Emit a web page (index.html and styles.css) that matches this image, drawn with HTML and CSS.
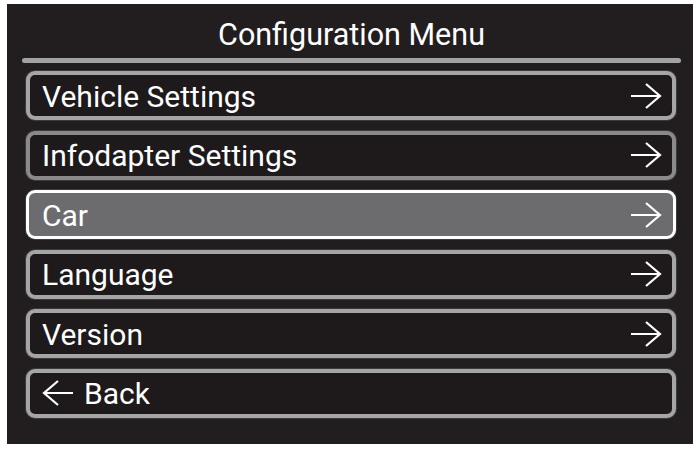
FILE: index.html
```html
<!DOCTYPE html>
<html lang="en">
<head>
<meta charset="UTF-8">
<meta name="viewport" content="width=device-width, initial-scale=1.0">
<title>Configuration Menu</title>
<link rel="stylesheet" href="styles.css">
</head>
<body>
<div class="screen">
  <div class="header">
    <h1>Configuration Menu</h1>
    <div class="rule"></div>
  </div>
  <div class="menu">
    <div class="item">
      <span>Vehicle Settings</span>
      <svg class="arrow" viewBox="0 0 32 26"><path d="M1 13H30M16 1L30 13L16 25"/></svg>
    </div>
    <div class="item dim">
      <span>Infodapter Settings</span>
      <svg class="arrow" viewBox="0 0 32 26"><path d="M1 13H30M16 1L30 13L16 25"/></svg>
    </div>
    <div class="item selected">
      <span>Car</span>
      <svg class="arrow" viewBox="0 0 32 26"><path d="M1 13H30M16 1L30 13L16 25"/></svg>
    </div>
    <div class="item">
      <span>Language</span>
      <svg class="arrow" viewBox="0 0 32 26"><path d="M1 13H30M16 1L30 13L16 25"/></svg>
    </div>
    <div class="item">
      <span>Version</span>
      <svg class="arrow" viewBox="0 0 32 26"><path d="M1 13H30M16 1L30 13L16 25"/></svg>
    </div>
    <div class="item back">
      <svg class="arrow" viewBox="0 0 32 26"><path d="M31 13H2M16 1L2 13L16 25"/></svg>
      <span>Back</span>
    </div>
  </div>
</div>
</body>
</html>
```

FILE: styles.css
```css
body {
    margin: 0;
    background-color: #ffffff;
    font-family: Roboto, "Liberation Sans", sans-serif;
}

.screen {
    width: 686px;
    height: 440px;
    margin: 4px 0 0 7px;
    background-color: #221e1f;
    box-sizing: border-box;
    padding: 0 17px 0 19px;
}

.header {
    height: 59px;
    display: flex;
    flex-direction: column;
    justify-content: flex-end;
    margin: 0 -5px 0 -4px;
}

.header h1 {
    margin: 0 0 7px 0;
    font-size: 30.5px;
    font-weight: 400;
    color: #ffffff;
    text-align: center;
    line-height: 32px;
}

.rule {
    height: 5px;
    background-color: #a3a3a3;
    border-radius: 3px;
}

.menu {
    display: flex;
    flex-direction: column;
    gap: 10.5px;
    margin-top: 8px;
}

.item {
    height: 49px;
    box-sizing: border-box;
    border: 4px solid #a5a5a5;
    border-radius: 9px;
    box-shadow: 0 0 0 1px #3d3a3b;
    background-color: #1e1a1b;
    display: flex;
    align-items: center;
    justify-content: space-between;
    padding: 0 10px 0 12px;
    color: #ffffff;
    font-size: 30px;
}

.item span {
    line-height: 32px;
    padding-top: 2px;
}

.item.dim {
    border-color: #8a8a8a;
}

.item.selected {
    border: 3px solid #ffffff;
    background-color: #6c6c6e;
    padding: 0 11px 0 13px;
}

.item.back {
    justify-content: flex-start;
    gap: 10px;
}

.arrow {
    width: 32px;
    height: 26px;
    fill: none;
    stroke: #ffffff;
    stroke-width: 2.2;
}
```
